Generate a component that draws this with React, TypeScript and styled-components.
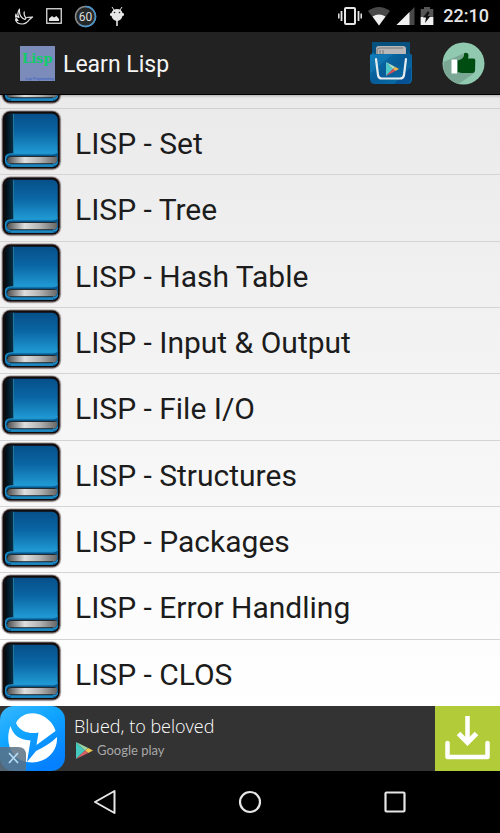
import React from "react";
import styled, { createGlobalStyle } from "styled-components";

const GlobalStyle = createGlobalStyle`
  * { box-sizing: border-box; }
  body { margin: 0; background: #000; font-family: Roboto, "Liberation Sans", sans-serif; }
  button { border: 0; padding: 0; margin: 0; background: none; color: inherit; font: inherit; cursor: pointer; }
  svg { display: block; flex: none; }
`;

const Screen = styled.div`
  display: flex;
  flex-direction: column;
  min-height: 100vh;
`;

const StatusBar = styled.div`
  display: flex;
  align-items: center;
  justify-content: space-between;
  height: 32px;
  padding: 0 11px 0 15px;
  background: #000;
  color: #e6e6e6;
`;

const StatusGroup = styled.div<{ $gap: number }>`
  display: flex;
  align-items: center;
  gap: ${(p) => p.$gap}px;
`;

const Clock = styled.time`
  margin-left: 4px;
  font-size: 18px;
  font-weight: 500;
  line-height: 32px;
`;

const AppBar = styled.header`
  display: flex;
  align-items: center;
  height: 63px;
  padding: 0 15px 0 20px;
  background: #222;
  border-bottom: 1px solid #000;
  color: #f5f5f5;
`;

const Title = styled.h1`
  flex: 1;
  margin: 0;
  padding: 4px 0 0 8px;
  font-size: 23px;
  font-weight: 400;
  line-height: 32px;
`;

const Actions = styled.div`
  display: flex;
  align-items: center;
  gap: 29px;
`;

const Content = styled.main`
  flex: 1;
  display: flex;
  flex-direction: column;
  background: linear-gradient(#eaeaea, #fff);
`;

const PartialRow = styled.div`
  display: flex;
  align-items: flex-end;
  height: 14px;
  overflow: hidden;
  padding-bottom: 3px;
  border-bottom: 1px solid #d0d0d0;
  box-shadow: inset 0 3px 3px -2px #aaa;
`;

const Lessons = styled.ul`
  flex: 1;
  display: grid;
  grid-auto-rows: 1fr;
  margin: 0;
  padding: 0;
  list-style: none;
`;

const Lesson = styled.li`
  display: flex;
  border-bottom: 1px solid #d4d4d4;
  &:last-child { border-bottom: 0; }
`;

const LessonButton = styled.button`
  flex: 1;
  display: flex;
  align-items: center;
  gap: 13px;
  padding-bottom: 3px;
  min-height: 64px;
  text-align: left;
  color: #1c1c1c;
`;

const LessonName = styled.span`
  padding-top: 8px;
  font-size: 30px;
  line-height: 36px;
`;

const Ad = styled.aside`
  display: flex;
  height: 65px;
  background: #333;
  color: #fff;
`;

const AdLogo = styled.div`
  position: relative;
  width: 65px;
  height: 65px;
`;

const AdClose = styled.button`
  position: absolute;
  left: 0;
  bottom: 0;
  width: 26px;
  height: 24px;
`;

const AdText = styled.div`
  flex: 1;
  padding: 8px 0 0 9px;
`;

const AdTitle = styled.div`
  font: 300 18px/24px "Open Sans", "Noto Sans", sans-serif;
`;

const StoreLine = styled.div`
  display: flex;
  align-items: center;
  gap: 4px;
  height: 24px;
  padding-left: 2px;
  color: #a8a8a8;
  font: 400 13px/20px Lato, "Open Sans", sans-serif;
`;

const Download = styled.button`
  width: 65px;
  background: #b2cb39;
`;

const NavBar = styled.nav`
  display: grid;
  grid-template-columns: repeat(3, 1fr);
  height: 62px;
  padding: 0 6.5%;
  background: #000;
`;

const NavButton = styled.button`
  display: flex;
  align-items: center;
  justify-content: center;
`;

function Book({ id }: { id: string }) {
  return (
    <svg width="62" height="62" viewBox="0 0 62 62" aria-hidden="true">
      <defs>
        <linearGradient id={`${id}c`} x1="0" y1="0" x2="0" y2="1">
          <stop offset="0" stopColor="#06508a" />
          <stop offset=".35" stopColor="#0a66a4" />
          <stop offset=".75" stopColor="#209bd4" />
          <stop offset="1" stopColor="#168aca" />
        </linearGradient>
        <linearGradient id={`${id}s`} x1="0" y1="0" x2="1" y2="0">
          <stop offset="0" stopColor="#020a10" />
          <stop offset="1" stopColor="#06314a" />
        </linearGradient>
        <linearGradient id={`${id}p`} x1="0" y1="0" x2="1" y2="0">
          <stop offset="0" stopColor="#4a4a4a" />
          <stop offset=".35" stopColor="#dedede" />
          <stop offset=".65" stopColor="#b4b4b4" />
          <stop offset="1" stopColor="#666" />
        </linearGradient>
      </defs>
      <rect x="1" y="1" width="60.500" height="60.500" rx="9" fill="#000" opacity=".12" />
      <rect x="1.800" y="1.800" width="59" height="59" rx="8.500" fill="#200" opacity=".4" />
      <rect x="2.700" y="2.600" width="57" height="57" rx="7.500" fill="#120b0c" />
      <rect x="5" y="4.800" width="52.700" height="53" rx="5.500" fill={`url(#${id}c)`} />
      <path d="M10 4.800h3.500V45H8q-3 1-3 4V10q0-5.200 5-5.200z" fill={`url(#${id}s)`} />
      <path d="M13.500 4.800V45" stroke="#23779d" />
      <path d="M5 49q0-4 5-4h42.700q3.500 0 5-2v10q0 5-5.700 5H11q-6 0-6-6z" fill="#07568a" />
      <path d="M57.500 42.500q-1 2.300-5 2.300H11q-5.500 0-5.500 6 0 5 5.500 5h42q4.500 0 4.500-3" fill="none" stroke="#1f92cd" strokeWidth="1.200" />
      <path d="M11 47.500h44.500q1.800 0 1.800 2 0 5.200-4.300 5.200H10.500q-3.500 0-3.500-3.600t4-3.600z" fill={`url(#${id}p)`} />
      <path d="M7 51q0-3.500 4-3.500h44.500M10 54.700h43" fill="none" stroke="#1b2226" strokeWidth=".9" />
      <path d="M11 57h42" stroke="#2390c8" strokeWidth="1.700" />
    </svg>
  );
}

function PlayMark({ size }: { size: number }) {
  return (
    <svg width={size} height={size} viewBox="0 0 16 18" preserveAspectRatio="none" aria-hidden="true">
      <path d="M0 0v18l8.500-9z" fill="#43c9bd" />
      <path d="M0 0l11.500 6.300L8.500 9z" fill="#9bd5a6" />
      <path d="M11.500 6.300L16 9l-4.500 2.700L8.500 9z" fill="#f1c753" />
      <path d="M0 18l11.500-6.300L8.500 9z" fill="#dc5e65" />
    </svg>
  );
}

function StatusIconsLeft() {
  return (
    <>
      <svg width="19" height="20" viewBox="0 0 19 20" fill="none" stroke="#e6e6e6" strokeWidth="1.200" strokeLinejoin="round" aria-hidden="true">
        <path d="M4.500 3C2.500 6 2.500 9 4 11.500 1.500 11 .8 9.500 1 8c-1 3 0 5 2 6.500-1.200 0-2-.3-2.500-1C1 16 3.500 18 7.500 18c4 0 5.500-2.500 7-4.500l3-2.500-4 .3c-2-.3-3 .7-3.500 2.200C6 12 4 8 4.500 3z" />
        <path d="M9.500 5.500c-1 2 0 4.500 1.500 6.500" />
      </svg>
      <svg width="16" height="16" viewBox="0 0 16 16" aria-hidden="true">
        <rect x=".75" y=".75" width="14.500" height="14.500" fill="none" stroke="#ddd" strokeWidth="1.300" />
        <path d="M3 13v-2.500l3-2.500 2 1.500L10.500 8l2.500 3v2z" fill="#e6e6e6" />
      </svg>
      <svg width="23" height="23" viewBox="0 0 23 23" role="img" aria-label="60">
        <circle cx="11.500" cy="11.500" r="10" fill="#252829" stroke="#8a8a8a" strokeWidth="1.500" />
        <path d="M11.500 1.500a10 10 0 1 1-6 18" fill="none" stroke="#4495cf" strokeWidth="1.500" />
        <text x="11.500" y="15.500" textAnchor="middle" fontFamily="Roboto, sans-serif" fontSize="12" fill="#ddd">60</text>
      </svg>
      <svg width="16" height="20" viewBox="0 0 16 20" fill="#e6e6e6" aria-hidden="true">
        <path d="M3 1l2 3M13 1l-2 3" stroke="#e6e6e6" />
        <path d="M2.500 7q1-4 5.500-4t5.500 4l1.500.5v2L13.500 10q-1 4.500-5.500 5-4.500-.5-5.500-5L1 9.500v-2z" />
        <path d="M7.200 14h1.600v6H7.200z" />
        <circle cx="5.500" cy="6.500" r=".8" fill="#222" />
        <circle cx="10.500" cy="6.500" r=".8" fill="#222" />
      </svg>
    </>
  );
}

function StatusIconsRight() {
  return (
    <>
      <svg width="24" height="20" viewBox="0 0 24 20" fill="none" stroke="#e6e6e6" aria-hidden="true">
        <rect x="7" y="2" width="10" height="16" rx="1" strokeWidth="2" />
        <path d="M3.500 5v10M20.500 5v10" strokeWidth="1.800" />
        <path d="M.8 7.500v5M23.200 7.500v5" strokeWidth="1.500" />
      </svg>
      <svg width="24" height="20" viewBox="0 0 24 20" aria-hidden="true">
        <path d="M1 5Q12-3 23 5L12 19.500z" fill="#484848" />
        <path d="M5.500 10.500q6.500-4 13 0L12 19.500z" fill="#f0f0f0" />
      </svg>
      <svg width="19" height="20" viewBox="0 0 19 20" aria-hidden="true">
        <path d="M18.500 1v18H.5z" fill="#484848" />
        <path d="M13.500 6v13H.5z" fill="#f0f0f0" />
      </svg>
      <svg width="14" height="20" viewBox="0 0 14 20" aria-hidden="true">
        <path d="M4 1h6v2h3.300v16H.7V3H4z" fill="#565656" />
        <path d="M.7 11h12.600v8H.7z" fill="#f0f0f0" />
        <path d="M8 5l-5 6.500h3L5 17l5.500-7h-3l2-3z" fill="#111" />
      </svg>
    </>
  );
}

function AppLogo() {
  return (
    <svg width="35" height="35" viewBox="0 0 35 35" role="img" aria-label="Lisp Programming">
      <rect width="35" height="35" fill="#7b8cba" />
      <text x="2" y="16.500" fontFamily="DejaVu Serif, serif" fontWeight="700" fontSize="13" fill="#10cc68">Lisp</text>
      <text x="34" y="34" textAnchor="end" fontFamily="Liberation Sans, sans-serif" fontSize="3.500" fill="#3459c4">Lisp Programming</text>
    </svg>
  );
}

function StoreIcon() {
  return (
    <svg width="44" height="44" viewBox="0 0 44 44" aria-hidden="true">
      <defs>
        <linearGradient id="bag" x1="0" y1="0" x2="1" y2="1">
          <stop offset="0" stopColor="#0b78b5" />
          <stop offset=".5" stopColor="#075c97" />
          <stop offset="1" stopColor="#0874ad" />
        </linearGradient>
      </defs>
      <path d="M3 1h38v12H3z" fill="#07517f" />
      <path d="M7 15V8q0-3 3-3h24q3 0 3 3v7z" fill="#b8b8b8" />
      <path d="M8 13V9q0-2 3-2h23M11 13V9M14 13V9" fill="none" stroke="#666" strokeWidth=".8" />
      <path d="M1 14l4-3v2h34v-2l4 3v24q0 5-5 5H6q-5 0-5-5z" fill="url(#bag)" />
      <path d="M24 13L1 33V14z" fill="#2493ca" opacity=".3" />
      <path d="M25 43l17-17v12q0 5-5 5z" fill="#063b85" opacity=".55" />
      <path d="M7 18l2 16q.4 3.500 4 3.500h18q3.500 0 4-3.500l2-16" fill="none" stroke="#e5ecef" strokeWidth="2.200" strokeLinecap="round" />
      <svg x="17" y="21" width="13" height="14" viewBox="0 0 16 18" preserveAspectRatio="none">
        <path d="M0 0v18l8.500-9z" fill="#4ec9c9" />
        <path d="M0 0l11.500 6.300L8.500 9z" fill="#b5ddc1" />
        <path d="M11.500 6.300L16 9l-4.500 2.700L8.500 9z" fill="#f6b348" />
        <path d="M0 18l11.500-6.300L8.500 9z" fill="#dd4b54" />
      </svg>
    </svg>
  );
}

function ThumbIcon() {
  return (
    <svg width="43" height="43" viewBox="0 0 43 43" aria-hidden="true">
      <circle cx="21.500" cy="21.500" r="21" fill="#91c9b0" />
      <path d="M23 11L1.500 20q-1 9 3 14 5 6 12 8l16-11z" fill="#7ba895" />
      <path d="M9.500 17.500H15v14H9.500z" fill="#fff" />
      <path d="M15.800 18.500q4.500-1 6.200-4.500v-2.500q2.500-1.500 4.200.5.800 1.500-.2 4.500h5.500q2 0 1.800 2l-.3 10.500q-.5 2-2.500 2H19.500l-3.700-1z" fill="#004d12" />
    </svg>
  );
}

function BluedLogo() {
  return (
    <svg width="65" height="65" viewBox="0 0 65 65" role="img" aria-label="Blued">
      <defs>
        <linearGradient id="sky" x1="0" y1="0" x2=".6" y2="1">
          <stop offset="0" stopColor="#38b8ff" />
          <stop offset=".45" stopColor="#10a5ff" />
          <stop offset="1" stopColor="#0580ff" />
        </linearGradient>
      </defs>
      <rect width="65" height="65" rx="14" fill="url(#sky)" />
      <path d="M16 17C21 7 34 5 43 10c7 4 11 9 12.500 15L36.500 39l2-12.500C32 28 20 27 16 17z" fill="#fff" />
      <path d="M10.500 20c2.500 9 9 14 20 14.500L27 56C12 54 4 37 10.500 20zM57 31c1 16-13 28-30 25l9-11c8-4 15-8 21-14z" fill="#fff" />
    </svg>
  );
}

const lessons = [
  "LISP - Set",
  "LISP - Tree",
  "LISP - Hash Table",
  "LISP - Input & Output",
  "LISP - File I/O",
  "LISP - Structures",
  "LISP - Packages",
  "LISP - Error Handling",
  "LISP - CLOS",
];

export default function App() {
  return (
    <Screen>
      <GlobalStyle />
      <StatusBar>
        <StatusGroup $gap={12}>
          <StatusIconsLeft />
        </StatusGroup>
        <StatusGroup $gap={5}>
          <StatusIconsRight />
          <Clock>22:10</Clock>
        </StatusGroup>
      </StatusBar>
      <AppBar>
        <AppLogo />
        <Title>Learn Lisp</Title>
        <Actions>
          <button aria-label="More apps"><StoreIcon /></button>
          <button aria-label="Rate this app"><ThumbIcon /></button>
        </Actions>
      </AppBar>
      <Content>
        <PartialRow>
          <Book id="partial" />
        </PartialRow>
        <Lessons>
          {lessons.map((name, i) => (
            <Lesson key={name}>
              <LessonButton>
                <Book id={`book${i}`} />
                <LessonName>{name}</LessonName>
              </LessonButton>
            </Lesson>
          ))}
        </Lessons>
      </Content>
      <Ad>
        <AdLogo>
          <BluedLogo />
          <AdClose aria-label="Close ad">
            <svg width="26" height="24" viewBox="0 0 26 24" aria-hidden="true">
              <path d="M0 0h18q8 0 8 8v16H0z" fill="#5a7184" opacity=".85" />
              <path d="M9 6l9 10M18 6L9 16" stroke="#b4d9f2" strokeWidth="1.800" />
            </svg>
          </AdClose>
        </AdLogo>
        <AdText>
          <AdTitle>Blued, to beloved</AdTitle>
          <StoreLine>
            <PlayMark size={17} />
            <span>Google play</span>
          </StoreLine>
        </AdText>
        <Download aria-label="Download">
          <svg width="65" height="65" viewBox="0 0 65 65" fill="none" stroke="#fff" aria-hidden="true">
            <path d="M12.500 37v14h40V37" strokeWidth="4.500" strokeLinecap="round" strokeLinejoin="round" />
            <path d="M32.500 10v26" strokeWidth="4.500" />
            <path d="M23.500 27.500l9 9 9-9" strokeWidth="5" />
          </svg>
        </Download>
      </Ad>
      <NavBar>
        <NavButton aria-label="Back">
          <svg width="24" height="26" viewBox="0 0 24 26" fill="none" stroke="#e6e6e6" strokeWidth="2" strokeLinejoin="round" aria-hidden="true">
            <path d="M21.500 2v22L2 13z" />
          </svg>
        </NavButton>
        <NavButton aria-label="Home">
          <svg width="24" height="24" viewBox="0 0 24 24" fill="none" stroke="#e6e6e6" strokeWidth="2.200" aria-hidden="true">
            <circle cx="12" cy="12" r="10" />
          </svg>
        </NavButton>
        <NavButton aria-label="Recent apps">
          <svg width="24" height="24" viewBox="0 0 24 24" fill="none" stroke="#e6e6e6" strokeWidth="2.200" aria-hidden="true">
            <rect x="2.500" y="2.500" width="19" height="19" rx="1" />
          </svg>
        </NavButton>
      </NavBar>
    </Screen>
  );
}
